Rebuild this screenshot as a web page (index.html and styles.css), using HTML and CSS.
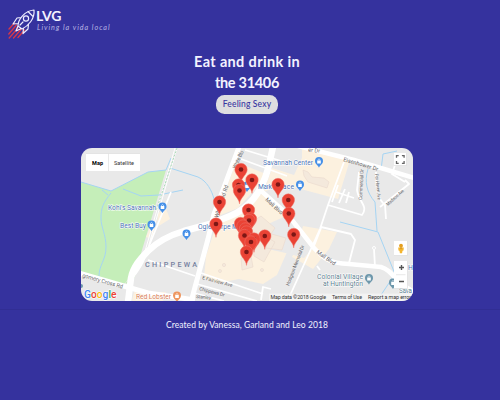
FILE: index.html
```html
<!DOCTYPE html>
<html lang="en">
<head>
<meta charset="utf-8">
<title>LVG</title>
<link rel="stylesheet" href="styles.css">
</head>
<body>
<header class="header">
  <svg class="rocket" viewBox="0 0 28 31" fill="none" stroke-linecap="round" stroke-linejoin="round">
    <path stroke="#d83748" stroke-width="1.300" d="M6.500 14 1 20M8.500 16 .8 25M10 19 1.200 29M13 20.500 5.500 29M16.500 21 10 28.500"/>
    <g stroke="#eeedff" stroke-width="1.200">
      <path d="M10 17c0-6 6-15 16-16 1 9-6 16-12 19l-4-3ZM20 2.500l4.500 4.500M13 8.500l-4 .5-4 6 5.500-.5M20.500 15l-.5 5-5 4.500.5-5.500M10 17l-2 5 5.500-2.500"/>
      <circle cx="18" cy="9.500" r="2.600"/><path d="m12 16 3-3"/>
    </g>
  </svg>
  <div class="brand">
    <div class="name">LVG</div>
    <div class="tagline">Living la vida local</div>
  </div>
</header>
<main class="main">
  <h1 class="title">Eat and drink in<br><span class="zip">the 31406</span></h1>
  <button class="mood">Feeling Sexy</button>
  <section class="map">
    <svg viewBox="81 148 332 153">
      <defs>
        <g id="pin">
          <path fill="#ea4335" stroke="#f0776d" stroke-width=".5" d="M0 13.400C-.5 7.500-6.200 5-6.200 0A6.200 6.200 0 1 1 6.200 0C6.200 5 .5 7.500 0 13.400Z"/>
          <circle r="2.300" fill="#7c1715"/>
        </g>
        <g id="poi">
          <path d="M0 6.300C-.5 4-4 3-4-.4a4 4 0 1 1 8 0C4 3 .5 4 0 6.300Z"/>
          <path fill="#fff" d="M-1.800-1h3.600v3h-3.600Z"/><path fill="none" stroke="#fff" stroke-width=".6" d="M-1-1c0-2 2-2 2 0"/>
        </g>
      </defs>
      <path fill="#e9e9e9" d="M81 148h332v153H81Z"/>
      <!-- park -->
      <path fill="#c5eeb9" d="M81 182 111 191 148 172 166 170 136 270 124 284 81 273Z"/>
      <path fill="#c5eeb9" d="M125 283 136 274 131 285Z"/>
      <!-- commercial blocks -->
      <g fill="#fcf1df">
        <path d="M236 162l30 12-8 12-20 22-22 9ZM302 148h14l34 12-12 39-56-15-18 8 8-24 22 7 8-17ZM216 226l47-33 24 22 3 30-13 30-14 9-24-5-20 4-15-5 2-22ZM303 226l34 6-8 17-16 20-21-12 6-12Z"/>
        <path d="m158 213 8-4 4 10-13 8ZM151 225h5l-4 14-6-2ZM134 292h32l-3 9h-31Z"/>
      </g>
      <path fill="#e9e9e9" d="m268 224 18-8 26 33-8 9-14-4-22-5Z"/>
      <g fill="#f4e9dc" stroke="#ead9cd" stroke-width=".6">
        <path d="m246 226 15-10 14 12-8 12-12-4ZM241 258l10-2 2 11-11 3ZM253 247l10-12 12 7-11 20-10-6ZM268 233l18 5-4 12-16-2ZM303 170l5 2 4 5 12 1 5 4-2 6-19-6-4-6Z"/>
        <circle cx="224" cy="265" r="1.600"/><circle cx="220" cy="271" r="1.500"/><circle cx="262" cy="270" r="1.500"/>
      </g>
      <!-- waterways -->
      <g fill="none" stroke="#a5d4f3" stroke-width="1">
        <path d="m81 182 30 9 37-19 18-2M102 190l6 5M123 189l18 7 18-1 24-5M111 193c-8 10-10 15-10 25 0 10 5 16 5 29s-7 18-7 29M171 158l-5 12M170 168l28 9c9 4 14 14 16 22M368 169c-4 13-1 24 7 33l2 29M381 170l2-16 14-3M340 222l38 10 17 42-18 27"/>
      </g>
      <!-- minor roads -->
      <g fill="none" stroke="#fff" stroke-width="1.800" stroke-linejoin="round">
        <path d="m245 150 46 14M241 159l46 17M344 162 328 205 320 229 288 300M328 205l34 10c7-9-4-14-5-25l2-18M332 202l6-17M339 203l6-14M346 203l3-11M336 192l18 6M376 172c0 17 1 26 9 33l1 14M380 207l29-23-4-4M405 182l-13-8 3-9M321 227l30 7 4 6-6 23M374 249l1 18M314 246l7-18M317 266l3 4M261 300l2-13 8 2M201 273l62 21M197 284l60 17M194 293l30 8M148 260l47 16M171 192l-27 66"/>
      </g>
      <circle cx="374" cy="248" r="1.500" fill="#e9e9e9" stroke="#fff"/>
      <!-- main roads -->
      <g fill="none" stroke="#fff" stroke-linejoin="round">
        <path stroke-width="2.800" d="m176 148-32 110c-2 7-7 13-15 24"/>
        <path stroke-width=".7" stroke="#dedede" d="m176 148-32 110"/>
        <path stroke-width="5" d="m239 147-25 67-6 25-17 63"/>
        <path stroke-width="4.500" d="m298 146 56 14 60 18"/>
        <path stroke-width="6.500" d="M273 147l-5 22c-7 25-20 40-38 47l-20 8-26 7c-17 5-27 11-36 20-8 8-15 16-17 27l-3 24"/>
        <path stroke-width="4.500" d="m258 188 30 27 26 33c10 11 15 15 35 16l32 3c10 3 14 11 17 15l16 10"/>
        <path stroke-width="5" d="m79 273 69 20 47 7"/>
      </g>
      <path fill="none" stroke="#9ad5a9" stroke-width=".8" stroke-dasharray="2 1.500" d="m177 148-21 63"/>
      <!-- street names -->
      <g class="street">
        <text transform="translate(236 169) rotate(-66)" textLength="19" lengthAdjust="spacingAndGlyphs">White Blu</text>
        <text transform="translate(218 218) rotate(-72)" textLength="34">Whitefield Rd</text>
        <text transform="translate(265 200) rotate(43)" textLength="22">Mall Blvd</text>
        <text transform="translate(316 253) rotate(35)" textLength="22">Mall Blvd</text>
        <text transform="translate(343 161) rotate(16)" textLength="36">Eisenhower Dr</text>
        <text transform="translate(308 151.500) rotate(6)" textLength="12">er Dr</text>
        <text class="small" transform="translate(362 200) rotate(-87)" textLength="31">Commercial Dr</text>
        <text class="small" transform="translate(375 174) rotate(84)" textLength="26" lengthAdjust="spacingAndGlyphs">Fox Haven Ave</text>
        <text class="small" transform="translate(388 206) rotate(-42)" textLength="22" lengthAdjust="spacingAndGlyphs">Madison Ave</text>
        <text class="small" transform="translate(289 286) rotate(-69)" textLength="43">Hodgson Memorial Dr</text>
        <text class="small" transform="translate(202 279) rotate(15)" textLength="31">E Fairview Ave</text>
        <text class="small" transform="translate(199 290) rotate(15)" textLength="26">Chippewa Dr</text>
        <text class="small" transform="translate(196 298) rotate(5)" textLength="15">Stanley</text>
        <text transform="translate(82 277) rotate(16)" textLength="42">gomery Cross Rd</text>
      </g>
      <!-- places -->
      <g class="place">
        <text x="108" y="210" textLength="48">Kohl's Savannah</text>
        <text x="120" y="228" textLength="26">Best Buy</text>
        <text x="263" y="165" textLength="50">Savannah Center</text>
        <text x="258" y="188.500" textLength="14">Mark</text>
        <text x="277" y="188.500" textLength="17">place</text>
        <text x="198" y="229" textLength="40">Oglethorpe M</text>
        <text x="408" y="270">H</text>
      </g>
      <g class="place slate">
        <text x="317" y="279" textLength="46">Colonial Village</text>
        <text x="323" y="286" textLength="40">at Huntington</text>
        <text x="399" y="293" textLength="13">Sava</text>
      </g>
      <text class="place food" x="136" y="299" textLength="35">Red Lobster</text>
      <text class="district" x="145" y="267" textLength="52">CHIPPEWA</text>
      <g fill="#4690e8">
        <use href="#poi" x="162.500" y="207"/><use href="#poi" x="151.500" y="225"/><use href="#poi" x="186.500" y="234"/><use href="#poi" x="319" y="161.500"/><use href="#poi" x="300" y="185"/><use href="#poi" x="247" y="186"/>
      </g>
      <g fill="#6d97ab"><use href="#poi" x="369" y="278.500"/><use href="#poi" x="393" y="283"/></g>
      <use href="#poi" x="177" y="296" fill="#ee9660"/>
      <circle cx="81" cy="286" r="2" fill="#6d97ab"/>
      <!-- venue markers -->
      <g>
        <use href="#pin" x="241" y="169.500"/><use href="#pin" x="252" y="180"/><use href="#pin" x="238.500" y="185"/><use href="#pin" x="278" y="184.500"/><use href="#pin" x="239.500" y="190.500"/>
        <use href="#pin" x="288.300" y="200"/><use href="#pin" x="219.500" y="202"/><use href="#pin" x="248.500" y="210"/><use href="#pin" x="288.800" y="213.500"/>
        <use href="#pin" x="250.500" y="219"/><use href="#pin" x="249" y="220.500"/><use href="#pin" x="240.500" y="223.500"/><use href="#pin" x="216" y="224"/><use href="#pin" x="243" y="226"/><use href="#pin" x="245.500" y="229"/><use href="#pin" x="246.500" y="232"/>
        <use href="#pin" x="293.700" y="234.500"/><use href="#pin" x="244.500" y="235.500"/><use href="#pin" x="264.800" y="236"/><use href="#pin" x="254" y="239"/><use href="#pin" x="251" y="242"/><use href="#pin" x="246.500" y="252"/>
      </g>
      <!-- controls -->
      <g class="controls">
        <path d="M86 153.500h54V171H86ZM394 153h12.500v12.500H394ZM394 241h13.500v14.500H394ZM394 261h13.500v27.500H394Z"/>
      </g>
      <path stroke="#e0e0e0" stroke-width=".7" d="M108.500 153.500V171M396 274.700h9.500"/>
      <text class="control-label bold" x="92" y="164.500" textLength="11">Map</text>
      <text class="control-label" x="114" y="164.500" textLength="20">Satellite</text>
      <path fill="none" stroke="#666" stroke-width="1.300" d="M396.500 157.800v-2.200h2.200M401.900 155.600h2.200v2.200M404.100 161.100v2.200h-2.200M398.700 163.300h-2.200v-2.200"/>
      <path fill="none" stroke="#555" stroke-width="1.400" d="M399 267.500h5M401.500 265v5M399 281.500h5"/>
      <circle cx="401" cy="245.700" r="1.900" fill="#e59f20"/><path fill="#f4b52e" d="M398.200 247.500h5.600l-.3 3-1 .3-.4 2.500h-2.200l-.4-2.500-1-.3Z"/><path fill="#c88719" d="M399.900 247.500h2.200l-1.100 2Z"/>
      <!-- attribution -->
      <path fill="#f5f5f5" fill-opacity=".75" d="M269 293.500h144v7.500H269Z"/>
      <text class="legal" x="270.500" y="299" textLength="55.500">Map data ©2018 Google</text>
      <text class="legal" x="332" y="299" textLength="30">Terms of Use</text>
      <text class="legal" x="368" y="299" textLength="43">Report a map error</text>
      <text class="google" x="84" y="297.500" textLength="32.500" lengthAdjust="spacingAndGlyphs"><tspan fill="#4285f4">G</tspan><tspan fill="#ea4335">o</tspan><tspan fill="#fbbc05">o</tspan><tspan fill="#4285f4">g</tspan><tspan fill="#34a853">l</tspan><tspan fill="#ea4335">e</tspan></text>
    </svg>
  </section>
</main>
<footer class="footer">Created by Vanessa, Garland and Leo 2018</footer>
</body>
</html>
```
FILE: styles.css
```css
* { box-sizing: border-box; }
body {
  margin: 0;
  height: 400px;
  overflow: hidden;
  display: flex;
  flex-direction: column;
  background: #35329e;
  color: #f3f2ff;
  font-family: Lato, "Open Sans", sans-serif;
}
.header {
  height: 51px;
  padding: 9px 0 0 8px;
  display: flex;
}
.rocket { width: 28px; height: 31px; flex: none; }
.brand { white-space: nowrap; }
.name {
  height: 14px;
  font-size: 14px;
  line-height: 14px;
  font-weight: 700;
  letter-spacing: -0.1px;
}
.tagline {
  padding-left: 1px;
  font-size: 7.2px;
  line-height: 10px;
  font-style: italic;
  letter-spacing: 0.98px;
  color: #b6b4e4;
}
.main {
  display: flex;
  flex-direction: column;
  align-items: center;
  padding-right: 6px;
}
.title {
  margin: 0 0 2px;
  font-size: 14.5px;
  line-height: 21px;
  font-weight: 700;
  letter-spacing: 0.35px;
  text-align: center;
}
.zip { letter-spacing: -0.3px; }
.mood {
  width: 62px;
  height: 19px;
  margin: 0 0 34px;
  padding: 0;
  border: 0;
  border-radius: 8.5px;
  background: #dedee0;
  color: #3835a0;
  font: 500 8.5px/19px Lato, sans-serif;
  letter-spacing: 0.15px;
}
.map {
  width: 332px;
  height: 153px;
  overflow: hidden;
  border-radius: 11px;
}
.map svg { display: block; width: 332px; height: 153px; }
.footer {
  height: 91px;
  margin-top: 8px;
  padding: 9px 6px 0 0;
  border-top: 1px solid #312e94;
  text-align: center;
  font-size: 8.5px;
  line-height: 12px;
  letter-spacing: 0.07px;
}
.street { font: 5.6px Roboto, sans-serif; fill: #68686b; }
.street .small { font-size: 4.8px; }
.place { font: 400 6.8px Roboto, sans-serif; fill: #4b72b5; stroke: #fff; stroke-width: 1px; paint-order: stroke; }
.slate { fill: #607f91; }
.food { fill: #d87b55; }
.district { font: 500 7.2px Roboto, sans-serif; fill: #74809e; }
.controls { fill: #fff; filter: drop-shadow(0 0.5px 0.7px #aaa); }
.control-label { font: 5.5px Roboto, sans-serif; fill: #333; }
.bold { font-weight: 700; fill: #000; }
.legal { font: 5.3px Roboto, sans-serif; fill: #333; }
.google { font: 500 10px Roboto, sans-serif; stroke: #fff; stroke-width: 1px; paint-order: stroke; }
```
